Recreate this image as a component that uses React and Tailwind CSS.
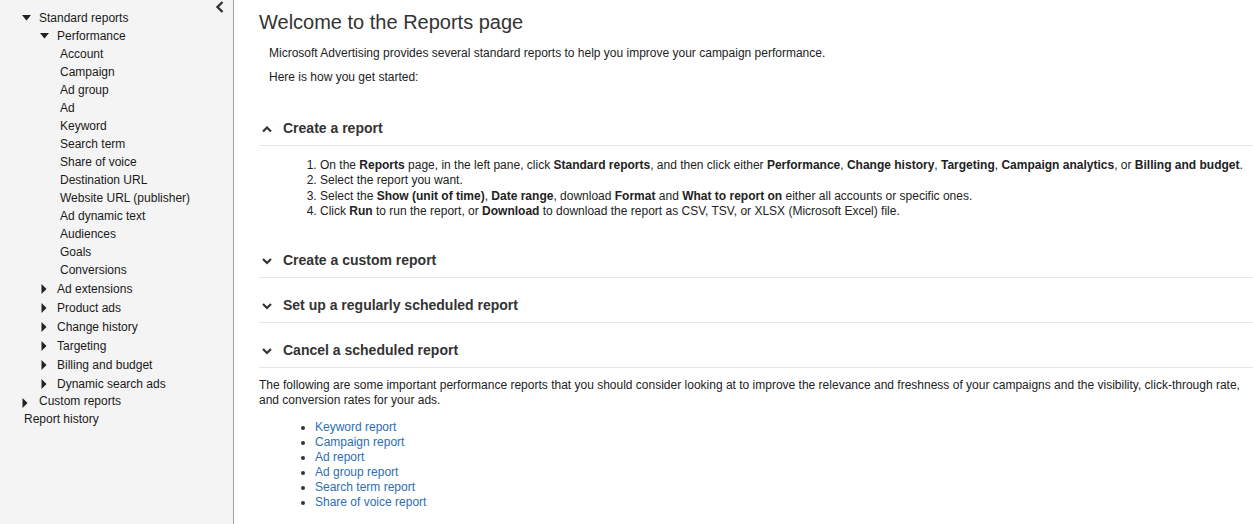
import React from 'react';

const FONT = "font-['Liberation_Sans',Arial,sans-serif]";

const PERFORMANCE = [
  'Account',
  'Campaign',
  'Ad group',
  'Ad',
  'Keyword',
  'Search term',
  'Share of voice',
  'Destination URL',
  'Website URL (publisher)',
  'Ad dynamic text',
  'Audiences',
  'Goals',
  'Conversions',
];

const COLLAPSED = ['Ad extensions', 'Product ads', 'Change history', 'Targeting', 'Billing and budget', 'Dynamic search ads'];

const LINKS = ['Keyword report', 'Campaign report', 'Ad report', 'Ad group report', 'Search term report', 'Share of voice report'];

function TriDown() {
  return (
    <svg width="9" height="6" viewBox="0 0 9 6" className="shrink-0">
      <polygon points="0,0 9,0 4.5,5.5" fill="#222" />
    </svg>
  );
}

function TriRight() {
  return (
    <svg width="6" height="10" viewBox="0 0 6 10" className="shrink-0">
      <polygon points="0.5,0 5.5,5 0.5,10" fill="#222" />
    </svg>
  );
}

function Chevron({ up }) {
  return (
    <svg width="12" height="12" viewBox="0 0 12 12" className="shrink-0">
      <path d={up ? 'M2 8.5 L6 4.5 L10 8.5' : 'M2 4 L6 8 L10 4'} fill="none" stroke="#333" strokeWidth="2.2" />
    </svg>
  );
}

function SectionHeader({ title, up }) {
  return (
    <div className="pt-[11px] border-b border-[#e6e6e6]">
      <div className="h-[33px] flex items-center gap-[10px] pl-[2px]">
        <Chevron up={up} />
        <span className="text-[14px] font-bold text-[#333]">{title}</span>
      </div>
    </div>
  );
}

export default function App() {
  return (
    <div className={`${FONT} flex w-full h-[524px] bg-white text-[12px] overflow-hidden`}>
      {/* Sidebar */}
      <aside className="relative w-[234px] shrink-0 bg-[#f4f4f4] border-r border-[#a0a0a0] text-[#1a1a1a] pt-[9px]">
        <svg width="10" height="12" viewBox="0 0 10 12" className="absolute left-[215px] top-[1px]">
          <path d="M7.5 1 L2.5 6 L7.5 11" fill="none" stroke="#333" strokeWidth="2.4" />
        </svg>
        <div className="h-[18px] flex items-center pl-[22px] gap-[8px]">
          <TriDown />
          <span>Standard reports</span>
        </div>
        <div className="h-[18px] flex items-center pl-[40px] gap-[8px]">
          <TriDown />
          <span>Performance</span>
        </div>
        {PERFORMANCE.map((item) => (
          <div key={item} className="h-[18px] flex items-center pl-[60px]">
            {item}
          </div>
        ))}
        <div>
          {COLLAPSED.map((item) => (
            <div key={item} className="h-[19px] flex items-center pl-[41px] gap-[10px]">
              <TriRight />
              <span>{item}</span>
            </div>
          ))}
        </div>
        <div className="h-[17px] flex pl-[22px] gap-[11px]">
          <span className="mt-[5px]"><TriRight /></span>
          <span className="leading-[16px]">Custom reports</span>
        </div>
        <div className="h-[18px] flex items-center pl-[24px]">Report history</div>
      </aside>

      {/* Main */}
      <main className="flex-1 pl-[25px] pt-[10px] text-[#222]">
        <h1 className="text-[20px] leading-[24px] text-[#333]">Welcome to the Reports page</h1>
        <p className="ml-[10px] mt-[12px] leading-[15px]">
          Microsoft Advertising provides several standard reports to help you improve your campaign performance.
        </p>
        <p className="ml-[10px] mt-[9px] leading-[15px]">Here is how you get started:</p>

        <div className="mt-[16px]">
          <SectionHeader title="Create a report" up />
          <ol className="list-decimal pl-[61px] pt-[12px] pb-[14px] leading-[15.3px]">
            <li>
              On the <b>Reports</b> page, in the left pane, click <b>Standard reports</b>, and then click either{' '}
              <b>Performance</b>, <b>Change history</b>, <b>Targeting</b>, <b>Campaign analytics</b>, or{' '}
              <b>Billing and budget</b>.
            </li>
            <li>Select the report you want.</li>
            <li>
              Select the <b>Show (unit of time)</b>, <b>Date range</b>, download <b>Format</b> and{' '}
              <b>What to report on</b> either all accounts or specific ones.
            </li>
            <li>
              Click <b>Run</b> to run the report, or <b>Download</b> to download the report as CSV, TSV, or XLSX
              (Microsoft Excel) file.
            </li>
          </ol>
          <SectionHeader title="Create a custom report" />
          <SectionHeader title="Set up a regularly scheduled report" />
          <SectionHeader title="Cancel a scheduled report" />
        </div>

        <p className="mt-[10px] leading-[15px] pr-[10px]">
          The following are some important performance reports that you should consider looking at to improve the
          relevance and freshness of your campaigns and the visibility, click-through rate, and conversion rates for
          your ads.
        </p>
        <ul className="list-disc pl-[56px] mt-[12px] leading-[15px] marker:text-[#333]">
          {LINKS.map((l) => (
            <li key={l}>
              <a href="#" className="text-[#2f6db5]">
                {l}
              </a>
            </li>
          ))}
        </ul>
      </main>
    </div>
  );
}
